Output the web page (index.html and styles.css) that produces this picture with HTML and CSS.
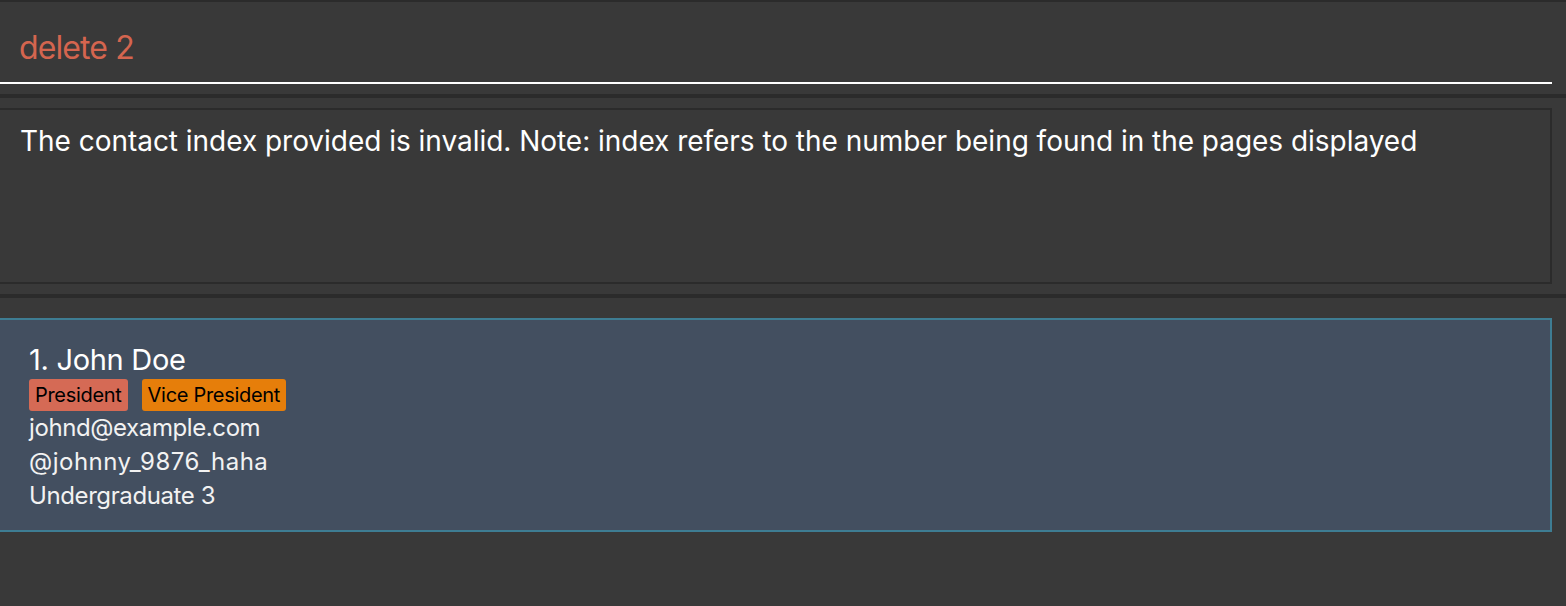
FILE: index.html
```html
<!DOCTYPE html>
<html>
<head>
<meta charset="utf-8">
<link rel="stylesheet" href="styles.css">
</head>
<body>
<div class="app">
  <div class="command-pane">
    <div class="command-input">delete 2</div>
  </div>
  <div class="separator"></div>
  <div class="result-pane">
    <div class="result-box">The contact index provided is invalid. Note: index refers to the number being found in the pages displayed</div>
  </div>
  <div class="separator"></div>
  <div class="list-pane">
    <div class="card">
      <div class="name">1. John Doe</div>
      <div class="tags">
        <span class="tag tag-president">President</span>
        <span class="tag tag-vice">Vice President</span>
      </div>
      <div class="detail">johnd@example.com</div>
      <div class="detail detail-handle">@johnny_9876_haha</div>
      <div class="detail">Undergraduate 3</div>
    </div>
  </div>
</div>
</body>
</html>
```
FILE: styles.css
```css
html, body {
  margin: 0;
  padding: 0;
  background: #393939;
  overflow: hidden;
}
.app {
  width: 1566px;
  height: 606px;
  font-family: Inter, "Noto Sans", sans-serif;
  border-top: 2px solid #2b2b2b;
  box-sizing: border-box;
}
.command-pane {
  height: 92px;
  padding-right: 14px;
  box-sizing: border-box;
}
.command-input {
  height: 82px;
  box-sizing: border-box;
  border-bottom: 2px solid #ffffff;
  color: #d4654f;
  font-size: 32px;
  letter-spacing: -0.9px;
  padding-left: 19px;
  padding-top: 26px;
  line-height: 40px;
}
.separator {
  height: 4px;
  background: #2b2b2b;
}
.result-pane {
  padding: 10px 14px 10px 0;
}
.result-box {
  height: 176px;
  box-sizing: border-box;
  border: 2px solid #2b2b2b;
  border-left: none;
  color: #ffffff;
  font-size: 28px;
  letter-spacing: -0.03px;
  line-height: 34px;
  padding: 14px 0 0 20px;
}
.list-pane {
  padding: 20px 14px 0 0;
}
.card {
  height: 214px;
  box-sizing: border-box;
  background: #434f60;
  border: 2px solid #3e7d93;
  border-left: none;
  padding: 22px 0 0 29px;
  color: #ffffff;
}
.name {
  font-size: 29px;
  line-height: 36px;
  letter-spacing: -0.3px;
}
.tags {
  display: flex;
  gap: 14px;
  margin-top: 1px;
}
.tag {
  color: #000000;
  font-size: 20px;
  line-height: 32px;
  padding: 0 6px;
  border-radius: 3px;
  letter-spacing: -0.3px;
}
.tag-president {
  background: #d56a55;
}
.tag-vice {
  background: #e67e0a;
}
.detail {
  font-size: 24px;
  line-height: 34px;
  letter-spacing: -0.4px;
  color: #f2f2f2;
}
.detail-handle {
  letter-spacing: 0.5px;
}
```
